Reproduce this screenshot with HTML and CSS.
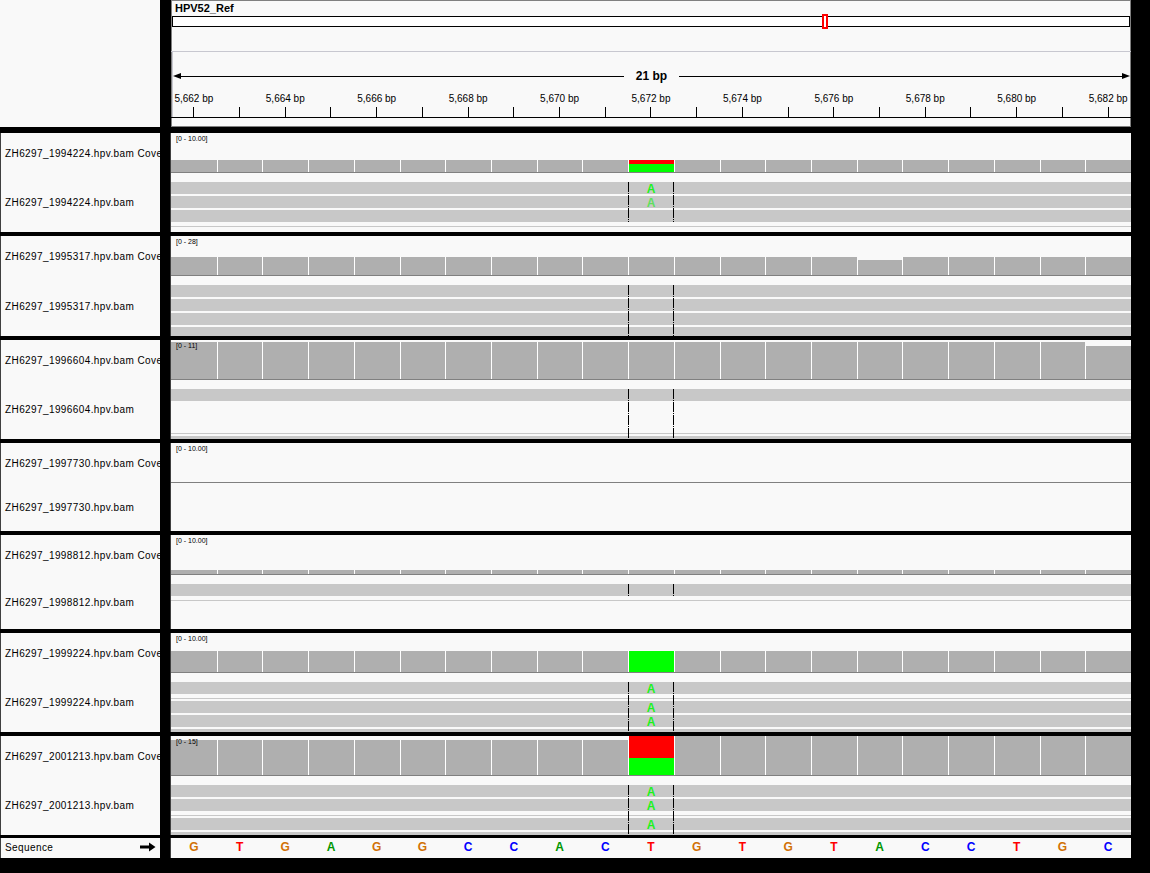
FILE: index.html
```html
<!DOCTYPE html>
<html>
<head>
<meta charset="utf-8">
<title>IGV - HPV52_Ref</title>
<link rel="stylesheet" href="styles.css">
</head>
<body>
<div class="app">

  <!-- header -->
  <div class="row header">
    <div class="names hdr-names"></div>
    <div class="data hdr">
      <div class="chrom">HPV52_Ref</div>
      <div class="ideo"><span class="ideo-mark"></span></div>
      <div class="ruler">
        <div class="span-row"><i class="ah ah-left"></i><b class="ln"></b><span class="span-txt">21 bp</span><b class="ln"></b><i class="ah ah-right"></i></div>
        <div class="labels">
          <span>5,662 bp</span><span></span><span>5,664 bp</span><span></span><span>5,666 bp</span><span></span><span>5,668 bp</span><span></span><span>5,670 bp</span><span></span><span>5,672 bp</span><span></span><span>5,674 bp</span><span></span><span>5,676 bp</span><span></span><span>5,678 bp</span><span></span><span>5,680 bp</span><span></span><span>5,682 bp</span>
        </div>
        <div class="ticks">
          <span></span><span></span><span></span><span></span><span></span><span></span><span></span><span></span><span></span><span></span><span></span><span></span><span></span><span></span><span></span><span></span><span></span><span></span><span></span><span></span><span></span>
        </div>
      </div>
    </div>
  </div>

  <!-- track 1 -->
  <div class="row trk h99">
    <div class="names">
      <div class="nm cov-nm">ZH6297_1994224.hpv.bam Coverage</div>
      <div class="nm aln-nm">ZH6297_1994224.hpv.bam</div>
    </div>
    <div class="data">
      <div class="cov">
        <span class="range">[0 - 10.00]</span>
        <div class="bar" style="height:12px"></div><div class="bar" style="height:12px"></div><div class="bar" style="height:12px"></div><div class="bar" style="height:12px"></div><div class="bar" style="height:12px"></div><div class="bar" style="height:12px"></div><div class="bar" style="height:12px"></div><div class="bar" style="height:12px"></div><div class="bar" style="height:12px"></div><div class="bar" style="height:12px"></div>
        <div class="bar var" style="height:12px"><i class="ref" style="height:4px"></i></div>
        <div class="bar" style="height:12px"></div><div class="bar" style="height:12px"></div><div class="bar" style="height:12px"></div><div class="bar" style="height:12px"></div><div class="bar" style="height:12px"></div><div class="bar" style="height:12px"></div><div class="bar" style="height:12px"></div><div class="bar" style="height:12px"></div><div class="bar" style="height:12px"></div><div class="bar" style="height:12px"></div>
      </div>
      <div class="aln">
        <div class="reads">
          <div class="read"><span class="mm">A</span></div>
          <div class="read"><span class="mm lq">A</span></div>
          <div class="read"></div>
          <div class="varcol"></div>
        </div>
        <div class="sep"></div>
      </div>
    </div>
  </div>

  <!-- track 2 -->
  <div class="row trk h100">
    <div class="names">
      <div class="nm cov-nm">ZH6297_1995317.hpv.bam Coverage</div>
      <div class="nm aln-nm">ZH6297_1995317.hpv.bam</div>
    </div>
    <div class="data">
      <div class="cov">
        <span class="range">[0 - 28]</span>
        <div class="bar" style="height:18px"></div><div class="bar" style="height:18px"></div><div class="bar" style="height:18px"></div><div class="bar" style="height:18px"></div><div class="bar" style="height:18px"></div><div class="bar" style="height:18px"></div><div class="bar" style="height:18px"></div><div class="bar" style="height:18px"></div><div class="bar" style="height:18px"></div><div class="bar" style="height:18px"></div><div class="bar" style="height:18px"></div><div class="bar" style="height:18px"></div><div class="bar" style="height:18px"></div><div class="bar" style="height:18px"></div><div class="bar" style="height:18px"></div>
        <div class="bar" style="height:15px"></div>
        <div class="bar" style="height:18px"></div><div class="bar" style="height:18px"></div><div class="bar" style="height:18px"></div><div class="bar" style="height:18px"></div><div class="bar" style="height:18px"></div>
      </div>
      <div class="aln">
        <div class="reads">
          <div class="read"></div>
          <div class="read"></div>
          <div class="read"></div>
          <div class="read"></div>
          <div class="varcol"></div>
        </div>
      </div>
    </div>
  </div>

  <!-- track 3 -->
  <div class="row trk h99">
    <div class="names">
      <div class="nm cov-nm">ZH6297_1996604.hpv.bam Coverage</div>
      <div class="nm aln-nm">ZH6297_1996604.hpv.bam</div>
    </div>
    <div class="data">
      <div class="cov">
        <span class="range">[0 - 11]</span>
        <div class="bar" style="height:37px"></div><div class="bar" style="height:37px"></div><div class="bar" style="height:37px"></div><div class="bar" style="height:37px"></div><div class="bar" style="height:37px"></div><div class="bar" style="height:37px"></div><div class="bar" style="height:37px"></div><div class="bar" style="height:37px"></div><div class="bar" style="height:37px"></div><div class="bar" style="height:37px"></div><div class="bar" style="height:37px"></div><div class="bar" style="height:37px"></div><div class="bar" style="height:37px"></div><div class="bar" style="height:37px"></div><div class="bar" style="height:37px"></div><div class="bar" style="height:37px"></div><div class="bar" style="height:37px"></div><div class="bar" style="height:37px"></div><div class="bar" style="height:37px"></div><div class="bar" style="height:37px"></div>
        <div class="bar" style="height:33px"></div>
      </div>
      <div class="aln">
        <div class="reads">
          <div class="read"></div>
          <div class="spacer"></div>
          <div class="sep"></div>
          <div class="read"></div>
          <div class="varcol"></div>
        </div>
      </div>
    </div>
  </div>

  <!-- track 4 -->
  <div class="row trk h88">
    <div class="names">
      <div class="nm cov-nm">ZH6297_1997730.hpv.bam Coverage</div>
      <div class="nm aln-nm">ZH6297_1997730.hpv.bam</div>
    </div>
    <div class="data">
      <div class="cov">
        <span class="range">[0 - 10.00]</span>
      </div>
      <div class="aln"></div>
    </div>
  </div>

  <!-- track 5 -->
  <div class="row trk h94">
    <div class="names">
      <div class="nm cov-nm">ZH6297_1998812.hpv.bam Coverage</div>
      <div class="nm aln-nm">ZH6297_1998812.hpv.bam</div>
    </div>
    <div class="data">
      <div class="cov">
        <span class="range">[0 - 10.00]</span>
        <div class="bar" style="height:4px"></div><div class="bar" style="height:4px"></div><div class="bar" style="height:4px"></div><div class="bar" style="height:4px"></div><div class="bar" style="height:4px"></div><div class="bar" style="height:4px"></div><div class="bar" style="height:4px"></div><div class="bar" style="height:4px"></div><div class="bar" style="height:4px"></div><div class="bar" style="height:4px"></div><div class="bar" style="height:4px"></div><div class="bar" style="height:4px"></div><div class="bar" style="height:4px"></div><div class="bar" style="height:4px"></div><div class="bar" style="height:4px"></div><div class="bar" style="height:4px"></div><div class="bar" style="height:4px"></div><div class="bar" style="height:4px"></div><div class="bar" style="height:4px"></div><div class="bar" style="height:4px"></div><div class="bar" style="height:4px"></div>
      </div>
      <div class="aln">
        <div class="reads">
          <div class="read"></div>
          <div class="varcol"></div>
        </div>
        <div class="sep"></div>
      </div>
    </div>
  </div>

  <!-- track 6 -->
  <div class="row trk h99">
    <div class="names">
      <div class="nm cov-nm">ZH6297_1999224.hpv.bam Coverage</div>
      <div class="nm aln-nm">ZH6297_1999224.hpv.bam</div>
    </div>
    <div class="data">
      <div class="cov">
        <span class="range">[0 - 10.00]</span>
        <div class="bar" style="height:21px"></div><div class="bar" style="height:21px"></div><div class="bar" style="height:21px"></div><div class="bar" style="height:21px"></div><div class="bar" style="height:21px"></div><div class="bar" style="height:21px"></div><div class="bar" style="height:21px"></div><div class="bar" style="height:21px"></div><div class="bar" style="height:21px"></div><div class="bar" style="height:21px"></div>
        <div class="bar var" style="height:21px"></div>
        <div class="bar" style="height:21px"></div><div class="bar" style="height:21px"></div><div class="bar" style="height:21px"></div><div class="bar" style="height:21px"></div><div class="bar" style="height:21px"></div><div class="bar" style="height:21px"></div><div class="bar" style="height:21px"></div><div class="bar" style="height:21px"></div><div class="bar" style="height:21px"></div><div class="bar" style="height:21px"></div>
      </div>
      <div class="aln">
        <div class="reads">
          <div class="read"><span class="mm">A</span></div>
          <div class="sep"></div>
          <div class="read"><span class="mm">A</span></div>
          <div class="read"><span class="mm">A</span></div>
          <div class="read"></div>
          <div class="varcol"></div>
        </div>
      </div>
    </div>
  </div>

  <!-- track 7 -->
  <div class="row trk h99">
    <div class="names">
      <div class="nm cov-nm">ZH6297_2001213.hpv.bam Coverage</div>
      <div class="nm aln-nm">ZH6297_2001213.hpv.bam</div>
    </div>
    <div class="data">
      <div class="cov">
        <span class="range">[0 - 15]</span>
        <div class="bar" style="height:35px"></div><div class="bar" style="height:35px"></div><div class="bar" style="height:35px"></div><div class="bar" style="height:35px"></div><div class="bar" style="height:35px"></div><div class="bar" style="height:35px"></div><div class="bar" style="height:35px"></div><div class="bar" style="height:35px"></div><div class="bar" style="height:35px"></div><div class="bar" style="height:35px"></div>
        <div class="bar var" style="height:39px"><i class="ref" style="height:22px"></i></div>
        <div class="bar" style="height:39px"></div><div class="bar" style="height:39px"></div><div class="bar" style="height:39px"></div><div class="bar" style="height:39px"></div><div class="bar" style="height:39px"></div><div class="bar" style="height:39px"></div><div class="bar" style="height:39px"></div><div class="bar" style="height:39px"></div><div class="bar" style="height:39px"></div><div class="bar" style="height:39px"></div>
      </div>
      <div class="aln">
        <div class="reads">
          <div class="read"><span class="mm">A</span></div>
          <div class="read"><span class="mm">A</span></div>
          <div class="sep"></div>
          <div class="read"><span class="mm">A</span></div>
          <div class="read"></div>
          <div class="varcol"></div>
        </div>
      </div>
    </div>
  </div>

  <!-- sequence -->
  <div class="row seq">
    <div class="names seq-nm">
      <span class="seq-label">Sequence</span>
      <svg class="seq-arrow" width="16" height="10" viewBox="0 0 16 10"><path d="M0 3.5H9V0.5L15.5 5L9 9.5V6.5H0Z" fill="#000"/></svg>
    </div>
    <div class="data seq-data">
      <span class="g">G</span><span class="t">T</span><span class="g">G</span><span class="a">A</span><span class="g">G</span><span class="g">G</span><span class="c">C</span><span class="c">C</span><span class="a">A</span><span class="c">C</span><span class="t">T</span><span class="g">G</span><span class="t">T</span><span class="g">G</span><span class="t">T</span><span class="a">A</span><span class="c">C</span><span class="c">C</span><span class="t">T</span><span class="g">G</span><span class="c">C</span>
    </div>
  </div>

</div>
</body>
</html>
```

FILE: styles.css
```css
* { box-sizing: border-box; margin: 0; padding: 0; }

html, body { background: #000; }

body {
  width: 1150px;
  height: 873px;
  overflow: hidden;
  font-family: "Liberation Sans", Arial, sans-serif;
  color: #000;
}

.app {
  width: 1131px;
  display: flex;
  flex-direction: column;
  gap: 4px;
}

.row {
  display: grid;
  grid-template-columns: 160px 960px;
  column-gap: 11px;
}

.names {
  background: #f9f9f9;
  border-left: 1px solid #404040;
  overflow: hidden;
  display: flex;
  flex-direction: column;
}

.data {
  background: #f9f9f9;
  position: relative;
  overflow: hidden;
  display: flex;
  flex-direction: column;
  box-shadow: -1px 0 0 #404040;
}

/* ---------- header ---------- */
.header { height: 127px; margin-bottom: 2px; }
.hdr-names { border-left: none; }
.hdr {
  box-shadow: inset 1px 1px 0 #808080, inset -1px -1px 0 #808080;
}

.chrom {
  height: 16px;
  line-height: 16px;
  padding-left: 4px;
  font-size: 11px;
  font-weight: bold;
}

.ideo {
  height: 11px;
  margin: 0 1px;
  border: 1px solid #000;
  background: #fff;
  position: relative;
  overflow: visible;
}

.ideo-mark {
  position: absolute;
  left: 649px;
  top: -3px;
  width: 6px;
  height: 15px;
  border: 2px solid #f00;
  background: #fff;
}

.ruler {
  margin-top: 24px;
  border-top: 1px solid #c8c8d0;
  background: linear-gradient(#c8c8d0, #c8c8d0) 1px 0 / 1px 100% no-repeat;
}

.span-row {
  display: flex;
  align-items: center;
  height: 12px;
  margin-top: 18px;
  padding: 0 1px 0 2px;
}

.ah {
  display: block;
  width: 0;
  height: 0;
  border-top: 3px solid transparent;
  border-bottom: 3px solid transparent;
}
.ah-left { border-right: 8px solid #000; }
.ah-right { border-left: 8px solid #000; }

.ln {
  flex: 1;
  height: 1px;
  background: #000;
}

.span-txt {
  padding: 0 12px;
  font-size: 12px;
  line-height: 12px;
  font-weight: bold;
}

.labels {
  display: grid;
  grid-template-columns: repeat(21, 1fr);
  height: 12px;
  margin-top: 11px;
}
.labels span {
  font-size: 10px;
  line-height: 12px;
  text-align: center;
  white-space: nowrap;
}

.ticks {
  display: grid;
  grid-template-columns: repeat(21, 1fr);
  height: 11px;
  margin-top: 2px;
  border-bottom: 1px solid #000;
}
.ticks span {
  display: flex;
  justify-content: center;
}
.ticks span::before {
  content: "";
  width: 1px;
  height: 10px;
  background: #000;
}

/* ---------- tracks ---------- */
.h99 { height: 99px; }
.h100 { height: 100px; }
.h88 { height: 88px; }
.h94 { height: 94px; }

.nm {
  padding-left: 4px;
  font-size: 10px;
  letter-spacing: 0.4px;
  white-space: nowrap;
  display: flex;
  align-items: center;
}
.cov-nm { height: 40px; flex: none; }
.aln-nm { flex: 1; }

.cov {
  height: 40px;
  flex: none;
  border-bottom: 1px solid #808080;
  display: grid;
  grid-template-columns: repeat(21, 1fr);
  align-items: end;
  position: relative;
}

.range {
  position: absolute;
  top: 2px;
  left: 5px;
  font-size: 7px;
  line-height: 8px;
  white-space: nowrap;
  z-index: 2;
}

.bar { background: #afafaf; }
.bar + .bar { border-left: 1px solid #fff; }
.bar.var { background: #00ff00; }
.bar .ref { display: block; background: #ff0000; }

.aln {
  flex: 1;
  padding-top: 9px;
  display: flex;
  flex-direction: column;
}

.reads {
  position: relative;
  display: flex;
  flex-direction: column;
  gap: 2px;
  flex: none;
}

.read {
  height: 12px;
  flex: none;
  background: #c8c8c8;
  position: relative;
}

.spacer { height: 26px; flex: none; }

.sep {
  height: 1px;
  flex: none;
  margin-top: 2px;
  background: #c8c8c8;
}
.aln > .sep { margin-top: 4px; }

.mm {
  position: absolute;
  top: 1px;
  left: calc(100% * 10 / 21);
  width: calc(100% / 21);
  text-align: center;
  font-size: 12px;
  line-height: 12px;
  font-weight: bold;
  color: #1cf21c;
  z-index: 1;
}
.mm.lq { color: #5ee05e; }

.varcol {
  position: absolute;
  top: 0;
  bottom: 0;
  left: calc(100% * 10 / 21);
  width: calc(100% / 21);
  z-index: 2;
}
.varcol::before,
.varcol::after {
  content: "";
  position: absolute;
  top: 0;
  bottom: 0;
  width: 1px;
  background: repeating-linear-gradient(to bottom, #000 0 10px, transparent 10px 11px, #000 11px 12px, transparent 12px 13px);
}
.varcol::before { left: 0; }
.varcol::after { right: 0; }

/* ---------- sequence ---------- */
.seq { height: 20px; margin-top: -1px; }

.seq-nm {
  flex-direction: row;
  align-items: center;
  justify-content: space-between;
  padding: 0 4px 0 4px;
}
.seq-label {
  font-size: 10px;
  letter-spacing: 0.4px;
  line-height: 18px;
}
.seq-arrow { display: block; margin-top: -2px; }

.seq-data {
  display: grid;
  grid-template-columns: repeat(21, 1fr);
  font-size: 12px;
  line-height: 18px;
  font-weight: bold;
  text-align: center;
}
.seq-data .a { color: #009600; }
.seq-data .c { color: #0000ff; }
.seq-data .g { color: #d17105; }
.seq-data .t { color: #ff0000; }
```
